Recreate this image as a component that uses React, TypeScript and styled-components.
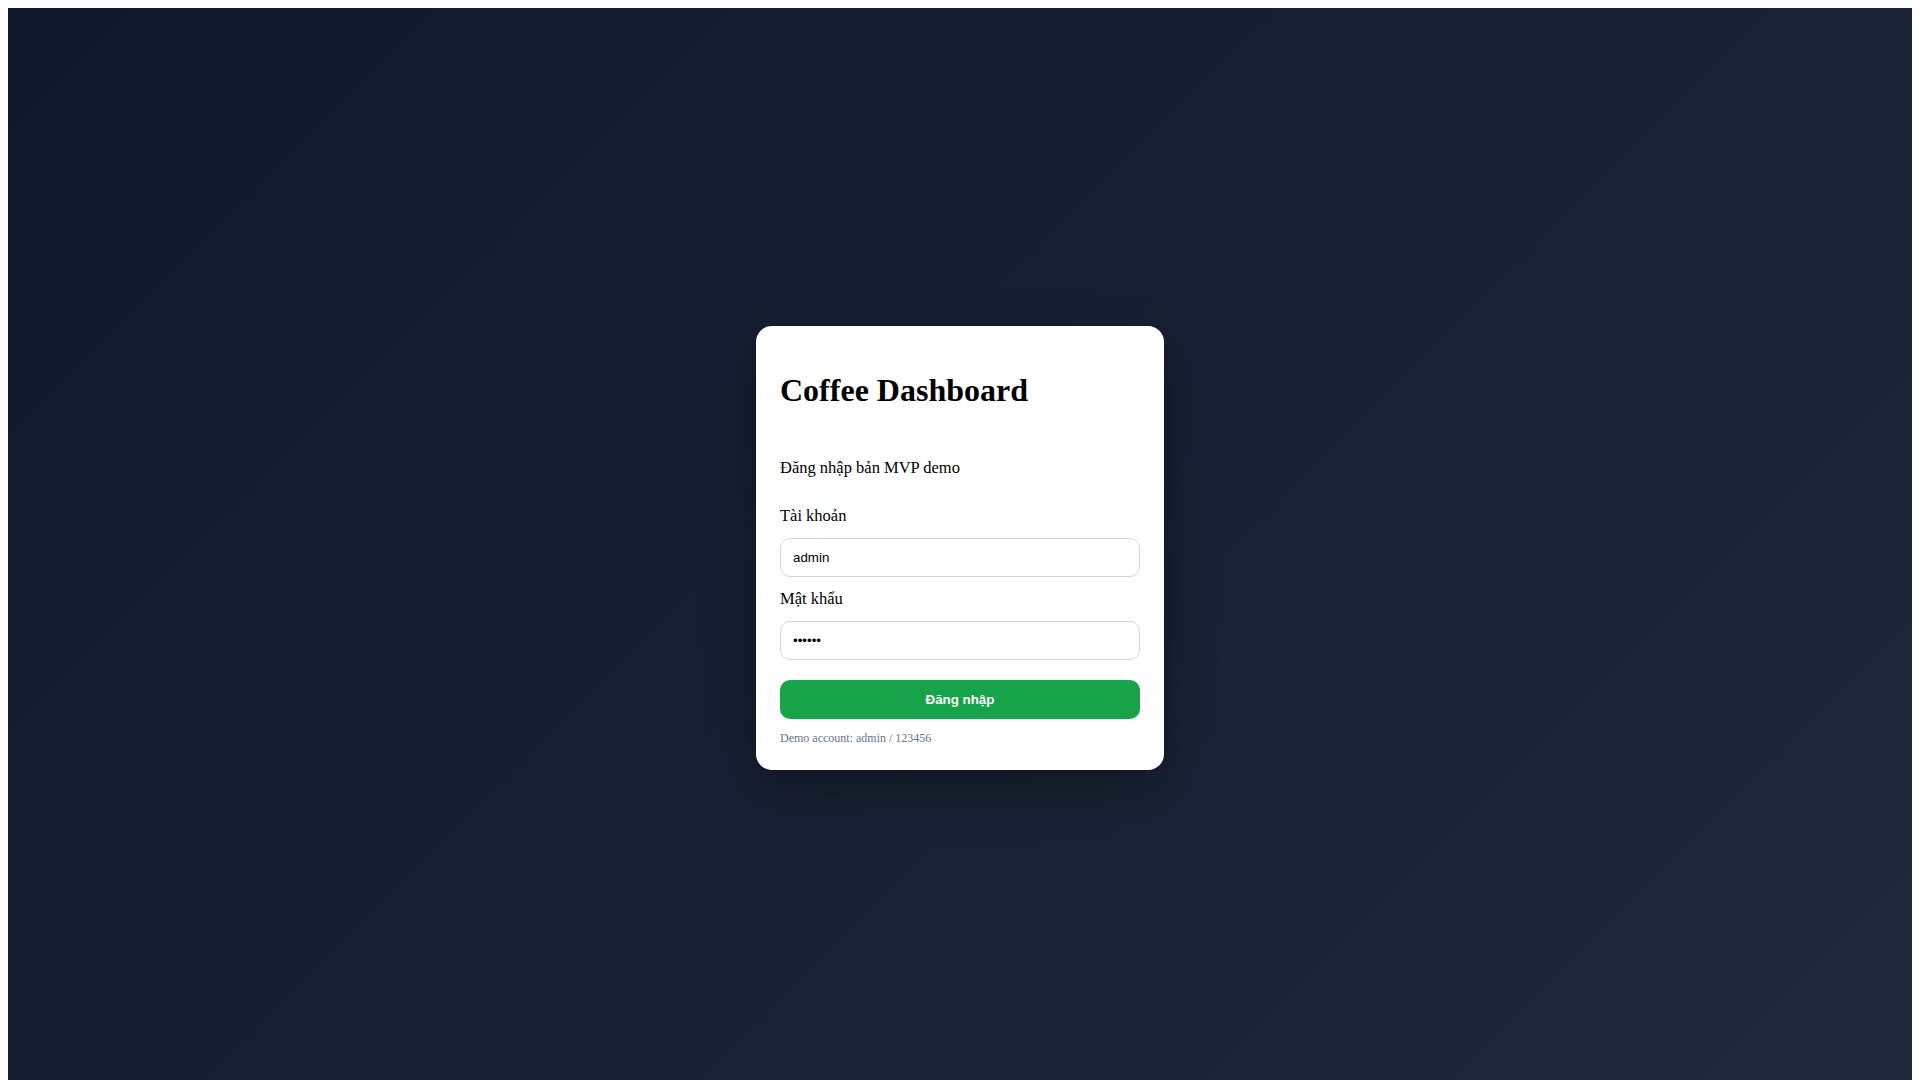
import React, { FC, useState } from 'react';
import styled, { createGlobalStyle } from 'styled-components';

const GlobalStyle = createGlobalStyle`
  body {
    margin: 8px;
    background: #ffffff;
    font-family: "Liberation Serif", "Times New Roman", serif;
  }
`;

const Screen = styled.div`
  min-height: 100vh;
  display: flex;
  align-items: center;
  justify-content: center;
  background: linear-gradient(135deg, #0f172a 0%, #1e293b 100%);
`;

const LoginCard = styled.form`
  width: 360px;
  padding: 24px;
  background: #ffffff;
  border-radius: 16px;
  box-shadow: 0 20px 50px rgba(0, 0, 0, 0.35);
  display: flex;
  flex-direction: column;
  gap: 12px;
`;

const Title = styled.h1`
  font-size: 32px;
  font-weight: bold;
  margin: 21.44px 0;
  color: #000;
`;

const Subtitle = styled.p`
  margin: 16px 0;
  font-size: 16.5px;
  color: #000;
`;

const Label = styled.label`
  display: block;
  font-size: 16.5px;
  color: #000;
`;

const Field = styled.input`
  width: 100%;
  box-sizing: border-box;
  padding: 11px 12px;
  border: 1px solid #d1d5db;
  border-radius: 10px;
  font-family: "Liberation Sans", Arial, sans-serif;
  font-size: 13.333px;
  color: #000;
  background: #fff;
  outline: none;
`;

const SubmitButton = styled.button`
  margin-top: 8px;
  padding: 12px;
  border: none;
  border-radius: 10px;
  background: #16a34a;
  color: #ffffff;
  font-family: "Liberation Sans", Arial, sans-serif;
  font-size: 13.333px;
  font-weight: bold;
  cursor: pointer;
`;

const Hint = styled.small`
  display: block;
  font-size: 12px;
  color: #64748b;
`;

const App: FC = () => {
  const [username, setUsername] = useState('admin');
  const [password, setPassword] = useState('123456');

  return (
    <>
      <GlobalStyle />
      <Screen>
        <LoginCard onSubmit={e => e.preventDefault()}>
          <Title>Coffee Dashboard</Title>
          <Subtitle>Đăng nhập bản MVP demo</Subtitle>
          <Label htmlFor="username">Tài khoản</Label>
          <Field
            id="username"
            value={username}
            onChange={e => setUsername(e.target.value)}
          />
          <Label htmlFor="password">Mật khẩu</Label>
          <Field
            id="password"
            type="password"
            value={password}
            onChange={e => setPassword(e.target.value)}
          />
          <SubmitButton type="submit">Đăng nhập</SubmitButton>
          <Hint>Demo account: admin / 123456</Hint>
        </LoginCard>
      </Screen>
    </>
  );
};

export default App;
